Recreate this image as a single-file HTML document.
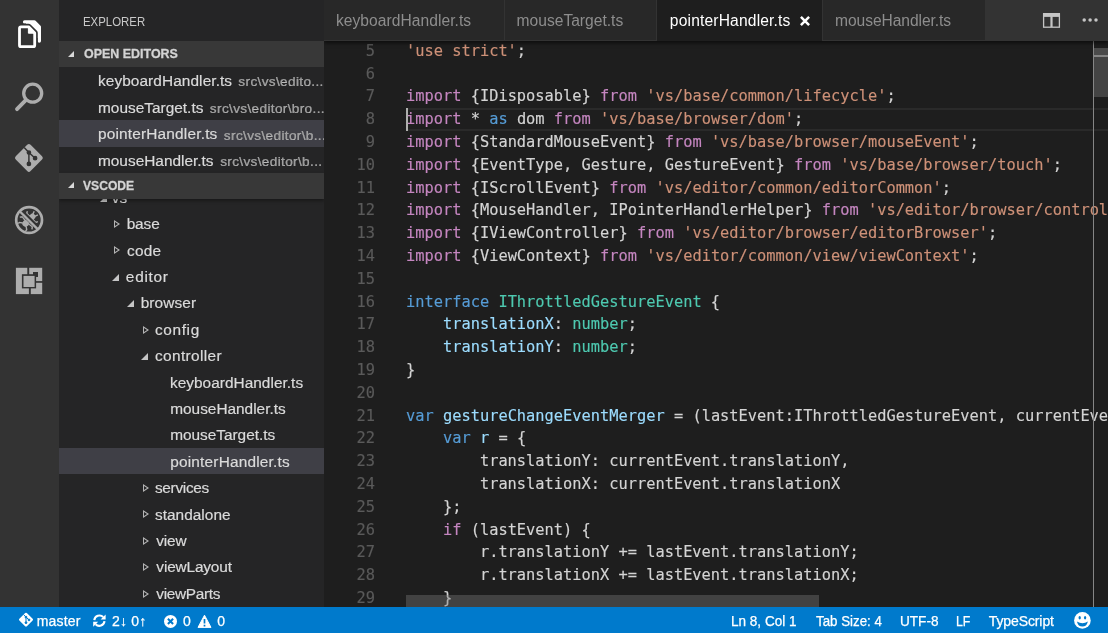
<!DOCTYPE html>
<html lang="en">
<head>
<meta charset="utf-8">
<title>pointerHandler.ts - vscode - Visual Studio Code</title>
<style>
*{box-sizing:border-box;margin:0;padding:0}
html,body{width:1108px;height:633px;overflow:hidden;background:#1e1e1e}
body{position:relative;font-family:"Liberation Sans",sans-serif;color:#ccc}
.abs{position:absolute}
.g{will-change:transform}
#activity{left:0;top:0;width:59px;height:607px;background:#333333}
#sidebar{left:59px;top:0;width:265px;height:607px;background:#252526;overflow:hidden}
#editor{left:324px;top:0;width:784px;height:607px;background:#1e1e1e;overflow:hidden}
#status{left:0;top:607px;width:1108px;height:26px;background:#007acc;color:#fff;font-size:14px;line-height:27px;white-space:nowrap;-webkit-text-stroke:.25px}
.st{height:26px;line-height:28px}
/* sidebar */
.ft{top:0;white-space:pre}
.title{left:0;top:0;width:265px;height:41px;line-height:43px;font-size:13px;color:#c8c8c8}
.hdr{left:0;width:265px;background:#383838;color:#d4d4d4;font-weight:bold;font-size:13.7px;-webkit-text-stroke:.3px;line-height:26.4px;z-index:3}
.hdr:before{content:"";position:absolute;left:8.6px;top:9.6px;border-left:6.4px solid transparent;border-bottom:6.4px solid #d8d8d8}
.row{left:0;width:265px;height:26.4px;line-height:27px;font-size:15.4px;color:#dadada;-webkit-text-stroke:.2px #dadada;white-space:nowrap;overflow:hidden}
.row.sel{background:#3f3f46}
.row .p{font-size:13.6px;color:#9a9a9a;top:1.5px}
.tw{position:absolute;top:50%;width:0;height:0}
.tw.c{border-left:6px solid #b4b4b4;border-top:4px solid transparent;border-bottom:4px solid transparent;margin-top:-3.4px}
.tw.c:after{content:"";position:absolute;left:-5px;top:-2px;border-left:3px solid #252526;border-top:2px solid transparent;border-bottom:2px solid transparent}
.tw.o{border-left:7px solid transparent;border-bottom:7px solid #c5c5c5;margin-top:-2.4px;margin-left:.8px}
/* tabs */
#tabs{left:0;top:0;width:784px;height:40.6px;background:#333333;z-index:5;box-shadow:0 2px 4px rgba(0,0,0,.6)}
.tab{top:0;height:40.6px;line-height:42px;background:#282828;color:#8d8d8d;font-size:15.6px;white-space:nowrap}
.tab:not(.act){border-bottom:1px solid #333333}
.tab.act{background:#1e1e1e;color:#fff}
/* code */
#code{left:0;top:0;width:784px;height:607px;overflow:hidden;font-family:"DejaVu Sans Mono","Liberation Mono",monospace;font-size:15.35px;color:#d4d4d4;-webkit-text-stroke:.15px}
.ln{left:0;width:2000px;height:22.8px;line-height:22.8px;white-space:pre}
.ln i{position:absolute;left:0;width:51px;text-align:right;color:#5a5a5a;font-style:normal}
.ln span.t{position:absolute;left:82px}
.k{color:#c586c0}.b{color:#569cd6}.s{color:#ce9178}.ty{color:#4ec9b0}.v{color:#9cdcfe}
#curline{left:82px;top:108px;width:702px;height:23px;border-top:2px solid #2a2a2a;border-bottom:2px solid #2a2a2a}
#cursor{left:82px;top:108px;width:2px;height:23px;background:#aeafad}
#vtrack{left:770px;top:40px;width:14px;height:567px;background:#222222}
#vline{left:769px;top:40px;width:1.3px;height:567px;background:#868686}
#vslider{left:770px;top:47.8px;width:14px;height:49.4px;background:#444444}
#vslider:before{content:"";position:absolute;left:0;top:0;width:14px;height:7px;background:#4b4b4b}
#vslider:after{content:"";position:absolute;left:0;top:6.9px;width:14px;height:2.2px;background:#858585}
#hslider{left:82px;top:594.6px;width:413px;height:12.4px;background:rgba(121,121,121,.4)}
</style>
</head>
<body>
<div id="root" class="abs g" style="left:0;top:0;width:1108px;height:633px">
<div id="activity" class="abs">
<svg class="abs" style="left:0;top:0" width="59" height="607" viewBox="0 0 59 607">
<!-- explorer -->
<g fill="none" stroke="#ffffff" stroke-width="3.4" stroke-linejoin="round" stroke-linecap="round">
<path d="M24.6 21.9H34.4L39.3 26.9V41"/><path d="M26 21.9H34.4L39.3 26.9V38H26Z" fill="#fff" stroke="none"/>
</g>
<path d="M21 26.8H28.6L34.7 33V45.2Q34.7 46.7 33.2 46.7H21Q19.5 46.7 19.5 45.2V28.3Q19.5 26.8 21 26.8Z" fill="#333333" stroke="#333333" stroke-width="6.2" stroke-linejoin="round"/>
<path d="M21 26.8H28.6L34.7 33V45.2Q34.7 46.7 33.2 46.7H21Q19.5 46.7 19.5 45.2V28.3Q19.5 26.8 21 26.8Z" fill="none" stroke="#ffffff" stroke-width="2.8" stroke-linejoin="round"/>
<path d="M28.4 26.8V33.2H34.7Z" fill="#ffffff" stroke="#ffffff" stroke-width="1" stroke-linejoin="round"/>
<!-- search -->
<g fill="none" stroke="#adadad" stroke-linecap="round">
<circle cx="32.7" cy="93.2" r="9" stroke-width="3.3"/>
<path d="M25.8 100.2L17 109.2" stroke-width="3.8"/>
</g>
<!-- git -->
<g transform="translate(28.9 157.9) rotate(45)">
<rect x="-10.5" y="-10.5" width="21" height="21" rx="2.4" fill="#adadad"/>
</g>
<g stroke="#333333" stroke-width="1.5" fill="#333333">
<path d="M24.2 147.6L28.9 152.5V163.9M28.9 152.5L35.1 158.2" fill="none"/>
<circle cx="28.9" cy="152.5" r="1.6"/><circle cx="28.9" cy="163.9" r="1.6"/><circle cx="35.1" cy="158.2" r="1.6"/>
</g>
<!-- debug -->
<g transform="translate(29.1 220) rotate(45)" fill="#adadad" stroke="#adadad">
<ellipse cx="0" cy="4.6" rx="3.3" ry="3.6" stroke="none"/>
<rect x="-2.4" y="-4" width="4.8" height="7" stroke="none"/>
<ellipse cx="0" cy="-4.6" rx="3" ry="3.1" stroke="none"/>
<g fill="none" stroke-width="1.4">
<path d="M-1.4 -6.6L-2.6 -9.8M1.4 -6.6L2.6 -9.8"/>
<path d="M-2 -3H-6.4L-7.4 -5M2 -3H6.4L7.4 -5"/>
<path d="M-3 3L-7 2.4L-8.6 4.6M3 3L7 2.4L8.6 4.6"/>
<path d="M-2.4 6.6L-5.2 8.6V10.2M2.4 6.6L5.2 8.6V10.2"/>
</g>
</g>
<path d="M20.28 210.62L38.48 228.82" stroke="#333333" stroke-width="4.8"/>
<circle cx="29.1" cy="220" r="12.9" fill="none" stroke="#adadad" stroke-width="2.7"/>
<path d="M19.65 211.25L37.85 229.45" stroke="#adadad" stroke-width="2.4"/>
<!-- extensions -->
<rect x="15.9" y="267.8" width="26.3" height="26.3" fill="#adadad"/>
<g fill="#333333">
<rect x="27.3" y="267" width="1.9" height="8"/>
<rect x="36" y="281.1" width="7" height="1.7"/>
<rect x="28.9" y="288" width="1.9" height="7"/>
<rect x="21.9" y="274.2" width="14.2" height="14.2"/>
<rect x="33" y="272" width="5" height="5"/>
</g>
<rect x="23.5" y="275.9" width="11.1" height="11.1" fill="#adadad"/>
</svg>
</div>
<div id="sidebar" class="abs">
<div class="title abs"><span id="h0" class="abs ft " style="left:24.36px;transform:scaleX(0.8773);transform-origin:0 0;">EXPLORER</span></div>
<div class="hdr abs" style="top:41px;height:25.8px"><span id="h1" class="abs ft " style="left:24.81px;transform:scaleX(0.9101);transform-origin:0 0;">OPEN EDITORS</span></div>
<div class="row abs" style="top:66.8px;height:26.7px"><span id="oe0" class="abs ft " style="left:38.97px;letter-spacing:0.087px;">keyboardHandler.ts</span><span id="op0" class="abs ft p" style="left:179.37px;letter-spacing:0.350px;">src\vs\edito...</span></div>
<div class="row abs" style="top:93.5px;height:26.7px"><span id="oe1" class="abs ft " style="left:38.97px;letter-spacing:0.014px;">mouseTarget.ts</span><span id="op1" class="abs ft p" style="left:150.87px;letter-spacing:0.350px;">src\vs\editor\bro...</span></div>
<div class="row abs sel" style="top:120.2px;height:26.6px"><span id="oe2" class="abs ft " style="left:38.97px;letter-spacing:0.185px;">pointerHandler.ts</span><span id="op2" class="abs ft p" style="left:164.87px;letter-spacing:0.350px;">src\vs\editor\b...</span></div>
<div class="row abs" style="top:146.8px;height:26.2px"><span id="oe3" class="abs ft " style="left:38.97px;letter-spacing:0.008px;">mouseHandler.ts</span><span id="op3" class="abs ft p" style="left:161.15px;letter-spacing:0.350px;">src\vs\editor\b...</span></div>
<div class="hdr abs" style="top:172.9px;height:25.6px;height:25.8px;box-shadow:0 2px 3px rgba(0,0,0,.35)"><span id="h2" class="abs ft " style="left:23.91px;transform:scaleX(0.8844);transform-origin:0 0;">VSCODE</span></div>
<div class="row tr abs" style="top:183.85px"><b class="tw o" style="left:40.5px"></b><span id="tr0" class="abs ft " style="left:52.80px;">vs</span></div>
<div class="row tr abs" style="top:210.25px"><b class="tw c" style="left:54.8px"></b><span id="tr1" class="abs ft " style="left:67.63px;letter-spacing:-0.060px;">base</span></div>
<div class="row tr abs" style="top:236.65px"><b class="tw c" style="left:54.8px"></b><span id="tr2" class="abs ft " style="left:67.99px;letter-spacing:0.240px;">code</span></div>
<div class="row tr abs" style="top:263.05px"><b class="tw o" style="left:52.5px"></b><span id="tr3" class="abs ft " style="left:66.87px;letter-spacing:0.720px;">editor</span></div>
<div class="row tr abs" style="top:289.45px"><b class="tw o" style="left:67px"></b><span id="tr4" class="abs ft " style="left:81.69px;letter-spacing:0.120px;">browser</span></div>
<div class="row tr abs" style="top:315.85px"><b class="tw c" style="left:84px"></b><span id="tr5" class="abs ft " style="left:95.93px;letter-spacing:0.648px;">config</span></div>
<div class="row tr abs" style="top:342.25px"><b class="tw o" style="left:81.5px"></b><span id="tr6" class="abs ft " style="left:95.93px;letter-spacing:0.380px;">controller</span></div>
<div class="row tr abs" style="top:368.65px"><span id="tr7" class="abs ft " style="left:110.91px;letter-spacing:0.036px;">keyboardHandler.ts</span></div>
<div class="row tr abs" style="top:395.05px"><span id="tr8" class="abs ft " style="left:111.19px;">mouseHandler.ts</span></div>
<div class="row tr abs" style="top:421.45px"><span id="tr9" class="abs ft " style="left:111.19px;letter-spacing:-0.020px;">mouseTarget.ts</span></div>
<div class="row tr abs sel" style="top:447.85px"><span id="tr10" class="abs ft " style="left:111.19px;letter-spacing:0.197px;">pointerHandler.ts</span></div>
<div class="row tr abs" style="top:474.25px"><b class="tw c" style="left:84px"></b><span id="tr11" class="abs ft " style="left:95.93px;letter-spacing:-0.300px;">services</span></div>
<div class="row tr abs" style="top:500.65px"><b class="tw c" style="left:84px"></b><span id="tr12" class="abs ft " style="left:95.93px;letter-spacing:0.040px;">standalone</span></div>
<div class="row tr abs" style="top:527.05px"><b class="tw c" style="left:84px"></b><span id="tr13" class="abs ft " style="left:97.37px;letter-spacing:-0.180px;">view</span></div>
<div class="row tr abs" style="top:553.45px"><b class="tw c" style="left:84px"></b><span id="tr14" class="abs ft " style="left:97.37px;letter-spacing:-0.160px;">viewLayout</span></div>
<div class="row tr abs" style="top:579.85px"><b class="tw c" style="left:84px"></b><span id="tr15" class="abs ft " style="left:97.37px;letter-spacing:-0.338px;">viewParts</span></div>
</div>
<div id="editor" class="abs">
<div id="tabs" class="abs">
<div class="tab abs" style="left:0.0px;width:180.4px"><span id="tab0" class="abs ft " style="left:11.91px;letter-spacing:0.053px;">keyboardHandler.ts</span></div>
<div class="tab abs" style="left:181.4px;width:151.0px"><span id="tab1" class="abs ft " style="left:11.19px;">mouseTarget.ts</span></div>
<div class="tab abs act" style="left:333.4px;width:164.6px"><span id="tab2" class="abs ft " style="left:12.45px;letter-spacing:0.169px;">pointerHandler.ts</span><svg class="abs" style="left:141.9px;top:14.6px" width="12" height="12" viewBox="0 0 12 12"><path d="M1.9 1.9L10.1 10.1M10.1 1.9L1.9 10.1" stroke="#fff" stroke-width="2.5" fill="none"/></svg></div>
<div class="tab abs" style="left:499.0px;width:162.0px"><span id="tab3" class="abs ft " style="left:12.05px;letter-spacing:-0.064px;">mouseHandler.ts</span></div>
<svg class="abs" style="left:700px;top:0" width="84" height="40" viewBox="1024 0 84 40">
<rect x="1043.6" y="14" width="15.8" height="13.2" fill="none" stroke="#c5c5c5" stroke-width="1.3"/>
<rect x="1043" y="13" width="17" height="3.9" fill="#c5c5c5"/>
<rect x="1050.4" y="16" width="2.2" height="11" fill="#c5c5c5"/>
<rect x="1009" y="18" width="2" height="1" fill="#414141"/>
<circle cx="1084.2" cy="20" r="1.75" fill="#c5c5c5"/><circle cx="1090.1" cy="20" r="1.75" fill="#c5c5c5"/><circle cx="1096" cy="20" r="1.75" fill="#c5c5c5"/>
</svg>
</div>
<div id="code" class="abs">
<div id="curline" class="abs"></div>
<div class="ln abs" style="top:39.8px"><i>5</i><span class="t"><span class="s">'use strict'</span>;</span></div>
<div class="ln abs" style="top:62.6px"><i>6</i><span class="t"></span></div>
<div class="ln abs" style="top:85.4px"><i>7</i><span class="t"><span class="k">import</span> {IDisposable} <span class="k">from</span> <span class="s">'vs/base/common/lifecycle'</span>;</span></div>
<div class="ln abs" style="top:108.2px"><i>8</i><span class="t"><span class="k">import</span> * <span class="b">as</span> dom <span class="k">from</span> <span class="s">'vs/base/browser/dom'</span>;</span></div>
<div class="ln abs" style="top:131.0px"><i>9</i><span class="t"><span class="k">import</span> {StandardMouseEvent} <span class="k">from</span> <span class="s">'vs/base/browser/mouseEvent'</span>;</span></div>
<div class="ln abs" style="top:153.8px"><i>10</i><span class="t"><span class="k">import</span> {EventType, Gesture, GestureEvent} <span class="k">from</span> <span class="s">'vs/base/browser/touch'</span>;</span></div>
<div class="ln abs" style="top:176.6px"><i>11</i><span class="t"><span class="k">import</span> {IScrollEvent} <span class="k">from</span> <span class="s">'vs/editor/common/editorCommon'</span>;</span></div>
<div class="ln abs" style="top:199.4px"><i>12</i><span class="t"><span class="k">import</span> {MouseHandler, IPointerHandlerHelper} <span class="k">from</span> <span class="s">'vs/editor/browser/controller/mouseHandler'</span>;</span></div>
<div class="ln abs" style="top:222.2px"><i>13</i><span class="t"><span class="k">import</span> {IViewController} <span class="k">from</span> <span class="s">'vs/editor/browser/editorBrowser'</span>;</span></div>
<div class="ln abs" style="top:245.0px"><i>14</i><span class="t"><span class="k">import</span> {ViewContext} <span class="k">from</span> <span class="s">'vs/editor/common/view/viewContext'</span>;</span></div>
<div class="ln abs" style="top:267.8px"><i>15</i><span class="t"></span></div>
<div class="ln abs" style="top:290.6px"><i>16</i><span class="t"><span class="b">interface</span> <span class="ty">IThrottledGestureEvent</span> {</span></div>
<div class="ln abs" style="top:313.4px"><i>17</i><span class="t">    <span class="v">translationX</span>: <span class="ty">number</span>;</span></div>
<div class="ln abs" style="top:336.2px"><i>18</i><span class="t">    <span class="v">translationY</span>: <span class="ty">number</span>;</span></div>
<div class="ln abs" style="top:359.0px"><i>19</i><span class="t">}</span></div>
<div class="ln abs" style="top:381.8px"><i>20</i><span class="t"></span></div>
<div class="ln abs" style="top:404.6px"><i>21</i><span class="t"><span class="b">var</span> <span class="v">gestureChangeEventMerger</span> = (lastEvent:IThrottledGestureEvent, currentEvent:MSGestureEvent): IThrottledGestureEvent =&gt; {</span></div>
<div class="ln abs" style="top:427.4px"><i>22</i><span class="t">    <span class="b">var</span> <span class="v">r</span> = {</span></div>
<div class="ln abs" style="top:450.2px"><i>23</i><span class="t">        translationY: currentEvent.translationY,</span></div>
<div class="ln abs" style="top:473.0px"><i>24</i><span class="t">        translationX: currentEvent.translationX</span></div>
<div class="ln abs" style="top:495.8px"><i>25</i><span class="t">    };</span></div>
<div class="ln abs" style="top:518.6px"><i>26</i><span class="t">    <span class="k">if</span> (lastEvent) {</span></div>
<div class="ln abs" style="top:541.4px"><i>27</i><span class="t">        r.translationY += lastEvent.translationY;</span></div>
<div class="ln abs" style="top:564.2px"><i>28</i><span class="t">        r.translationX += lastEvent.translationX;</span></div>
<div class="ln abs" style="top:587.0px"><i>29</i><span class="t">    }</span></div>
<div id="cursor" class="abs"></div>
<div id="vline" class="abs"></div>
<div id="vslider" class="abs"></div>
<div id="hslider" class="abs"></div>
</div>
</div>
<div id="status" class="abs">
<svg class="abs" style="left:0;top:0" width="1108" height="26" viewBox="0 607 1108 26">
<!-- git branch -->
<g transform="translate(26 619.7) rotate(45)"><rect x="-5.3" y="-5.3" width="10.6" height="10.6" rx="1.2" fill="#fff"/></g>
<g stroke="#007acc" stroke-width="1" fill="#007acc"><path d="M23.6 614.6L26 617.1V622.7M26 617.1L29 619.9" fill="none"/><circle cx="26" cy="617.1" r=".9"/><circle cx="26" cy="622.7" r=".9"/><circle cx="29" cy="619.9" r=".9"/></g>
<!-- sync -->
<g fill="none" stroke="#fff" stroke-width="2.1">
<path d="M94.3 620.2A5.2 5.2 0 0 1 103.2 617.1"/>
<path d="M104.5 621.2A5.2 5.2 0 0 1 95.6 624.3"/>
</g>
<path d="M105.6 614.6V619.6H100.6Z" fill="#fff"/>
<path d="M93.2 626.8V621.8H98.2Z" fill="#fff"/>
<!-- error -->
<circle cx="170.5" cy="621.4" r="6.5" fill="#fff"/>
<path d="M167.9 618.8L173.1 624M173.1 618.8L167.9 624" stroke="#007acc" stroke-width="2" fill="none"/>
<!-- warning -->
<path d="M204.5 615.2L211 627.4H198Z" fill="#fff" stroke="#fff" stroke-width="1" stroke-linejoin="round"/>
<path d="M204.5 619V623.6M204.5 624.8V626.4" stroke="#007acc" stroke-width="1.7" fill="none"/>
<!-- smiley -->
<circle cx="1082.4" cy="620.4" r="8.3" fill="#fff"/>
<ellipse cx="1079.7" cy="617.7" rx="1.15" ry="1.8" fill="#007acc"/><ellipse cx="1085.1" cy="617.7" rx="1.15" ry="1.8" fill="#007acc"/>
<path d="M1076.9 621.4Q1082.4 625 1087.9 621.4Q1086.6 626.6 1082.4 626.6Q1078.2 626.6 1076.9 621.4Z" fill="#007acc"/>
</svg>
<span id="st0" class="abs ft st" style="left:36.82px;letter-spacing:0.144px;">master</span>
<span id="st1" class="abs ft st" style="left:111.88px;letter-spacing:0.254px;">2↓ 0↑</span>
<span id="st2" class="abs ft st" style="left:182.94px;">0</span>
<span id="st3" class="abs ft st" style="left:217.28px;">0</span>
<span id="st4" class="abs ft st" style="left:730.88px;transform:scaleX(0.9672);transform-origin:0 0;">Ln 8, Col 1</span>
<span id="st5" class="abs ft st" style="left:815.94px;transform:scaleX(0.9503);transform-origin:0 0;">Tab Size: 4</span>
<span id="st6" class="abs ft st" style="left:900.10px;transform:scaleX(0.9699);transform-origin:0 0;">UTF-8</span>
<span id="st7" class="abs ft st" style="left:956.10px;transform:scaleX(0.8800);transform-origin:0 0;">LF</span>
<span id="st8" class="abs ft st" style="left:988.72px;letter-spacing:-0.100px;">TypeScript</span>
</div>
</div>
</body>
</html>
